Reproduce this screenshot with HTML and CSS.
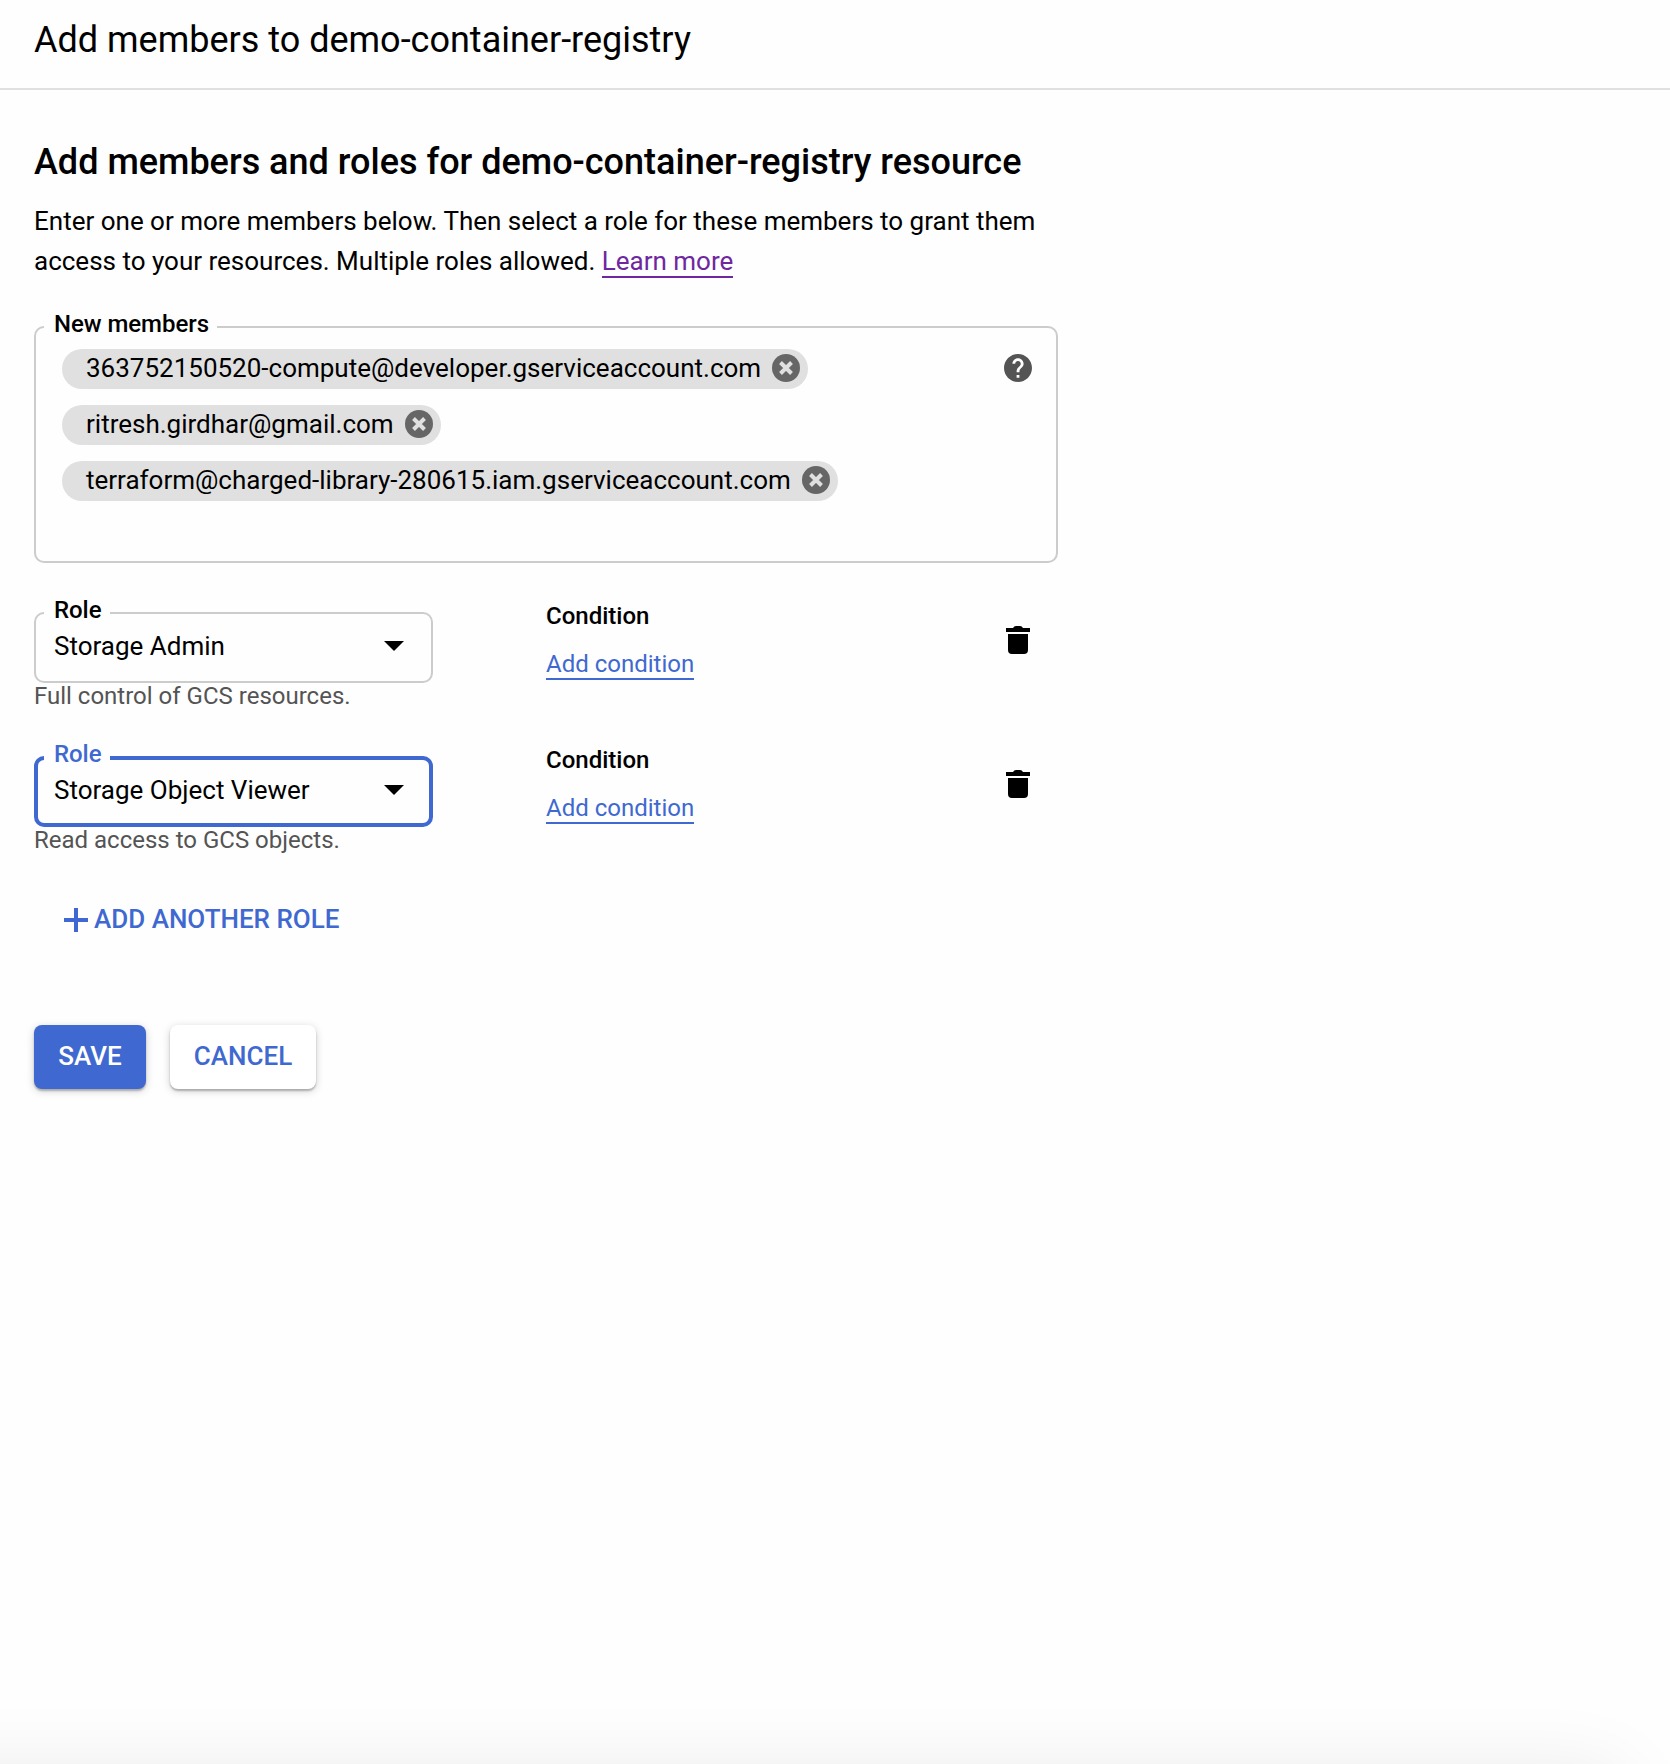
FILE: index.html
```html
<!DOCTYPE html>
<html lang="en">
<head>
<meta charset="utf-8">
<title>Add members to demo-container-registry</title>
<link rel="stylesheet" href="styles.css">
</head>
<body>
<svg class="sprite" aria-hidden="true">
  <symbol id="remove" viewBox="0 0 28 28"><circle cx="14" cy="14" r="14" fill="#666"/><path d="M8.500 8.500l11 11M19.500 8.500l-11 11" stroke="#e0e0e0" stroke-width="4"/></symbol>
  <symbol id="trash" viewBox="0 0 24 28"><path d="M0 2h7q1-2 3-2h4q2 0 3 2h7v4H0zM2 8h20v16q0 4-4 4H6q-4 0-4-4z"/></symbol>
</svg>
<header class="header"><h1 class="title">Add members to demo-container-registry</h1></header>
<main class="panel">
  <h2 class="heading">Add members and roles for demo-container-registry resource</h2>
  <p class="intro">Enter one or more members below. Then select a role for these members to grant them access to your resources. Multiple roles allowed. <a class="link link-visited" href="#">Learn more</a></p>

  <section class="field members">
    <span class="label">New members</span>
    <div class="chips">
      <div class="chip"><span class="chip-text">363752150520-compute@developer.gserviceaccount.com</span><svg class="chip-icon"><use href="#remove"/></svg></div>
      <div class="chip"><span class="chip-text">ritresh.girdhar@gmail.com</span><svg class="chip-icon"><use href="#remove"/></svg></div>
      <div class="chip"><span class="chip-text">terraform@charged-library-280615.iam.gserviceaccount.com</span><svg class="chip-icon"><use href="#remove"/></svg></div>
    </div>
    <svg class="help" viewBox="2 2 20 20"><path fill="#545454" d="M12 2C6.480 2 2 6.480 2 12s4.480 10 10 10 10-4.480 10-10S17.520 2 12 2zm1 17h-2v-2h2v2zm2.070-7.750l-.9.920C13.450 12.900 13 13.500 13 15h-2v-.5c0-1.100.450-2.100 1.170-2.830l1.240-1.260c.370-.360.590-.860.590-1.410 0-1.100-.9-2-2-2s-2 .9-2 2H8c0-2.210 1.790-4 4-4s4 1.790 4 4c0 .880-.360 1.680-.930 2.250z"/></svg>
  </section>

  <section class="role">
    <div class="role-select">
      <div class="field select"><span class="label">Role</span><span class="value">Storage Admin</span><svg class="arrow" viewBox="0 0 20 10"><path d="M0 0h20L10 10z"/></svg></div>
      <p class="hint">Full control of GCS resources.</p>
    </div>
    <div class="condition"><h3 class="condition-title">Condition</h3><a class="link" href="#">Add condition</a></div>
    <svg class="trash"><use href="#trash"/></svg>
  </section>
  <section class="role">
    <div class="role-select">
      <div class="field select focused"><span class="label">Role</span><span class="value">Storage Object Viewer</span><svg class="arrow" viewBox="0 0 20 10"><path d="M0 0h20L10 10z"/></svg></div>
      <p class="hint">Read access to GCS objects.</p>
    </div>
    <div class="condition"><h3 class="condition-title">Condition</h3><a class="link" href="#">Add condition</a></div>
    <svg class="trash"><use href="#trash"/></svg>
  </section>

  <button class="add-role"><svg class="plus" viewBox="0 0 24 24"><path d="M0 12h24M12 0v24" stroke="#3f69d0" stroke-width="4"/></svg>ADD ANOTHER ROLE</button>
  <div class="actions"><button class="btn primary">SAVE</button><button class="btn cancel">CANCEL</button></div>
</main>
<div class="bottom-shade"></div>
</body>
</html>
```

FILE: styles.css
```css
* { box-sizing: border-box; }
body { margin: 0; height: 1764px; position: relative; overflow: hidden; background: #fefefe; color: #000; font: 26px/40px Roboto, sans-serif; }
h1, h2, h3, p { margin: 0; }
button { border: 0; background: none; font: 500 26px/40px Roboto, sans-serif; color: #3f69d0; padding: 0; }
.sprite { position: absolute; width: 0; height: 0; }
.header { height: 90px; padding: 16px 34px 0; border-bottom: 2px solid #e0e0e0; }
.title { font-size: 36px; line-height: 48px; font-weight: 400; white-space: nowrap; }
.panel { width: 1024px; margin: 48px 0 0 34px; }
.heading { font-size: 36px; line-height: 48px; font-weight: 500; white-space: nowrap; margin-bottom: 15px; }
.intro { margin-bottom: 45px; }
.link { color: #3f69d0; text-decoration: none; border-bottom: 2px solid #3f69d0; }
.link-visited { color: #6f27a0; border-color: #6f27a0; }
.field { position: relative; border: 2px solid #ccc; border-radius: 10px; }
.label { position: absolute; left: 8px; top: -18px; padding: 0 8px 0 10px; background: #fefefe; font-size: 24px; line-height: 28px; font-weight: 500; letter-spacing: -.05px; white-space: nowrap; }
.members { height: 237px; padding: 21px 24px 0 26px; display: flex; align-items: flex-start; justify-content: space-between; }
.chips { display: flex; flex-direction: column; align-items: flex-start; gap: 16px; }
.chip { height: 40px; padding: 0 8px 0 24px; border-radius: 20px; background: #e0e0e0; display: flex; gap: 11px; }
.chip-text { line-height: 38px; white-space: nowrap; }
.chip-icon { width: 28px; height: 28px; margin-top: 5px; }
.help { width: 28px; height: 28px; margin-top: 5px; }
.role { display: flex; height: 95px; margin-top: 49px; }
.role-select { width: 399px; }
.select { height: 71px; display: flex; justify-content: space-between; padding: 12px 27px 0 18px; }
.value { line-height: 40px; }
.arrow { width: 20px; height: 10px; margin-top: 15px; }
.focused { border: 4px solid #3f69d0; padding: 10px 25px 0 16px; }
.focused .label { left: 6px; top: -20px; color: #3f69d0; }
.hint { margin-top: -1px; font-size: 24px; line-height: 28px; color: #545454; }
.condition { margin-left: 113px; width: 460px; font-size: 24px; }
.condition-title { font-size: 24px; line-height: 28px; font-weight: 500; margin-top: -10px; margin-bottom: 14px; }
.trash { width: 24px; height: 28px; margin-top: 14px; }
.add-role { display: flex; align-items: center; gap: 6px; margin: 48px 0 0 30px; }
.plus { width: 24px; height: 24px; margin-top: 2px; }
.actions { display: flex; gap: 24px; margin-top: 86px; }
.btn { height: 64px; padding: 0 0 2px; border-radius: 8px; background: #fff; box-shadow: 0 2px 2px rgba(0,0,0,.24), 0 2px 8px rgba(0,0,0,.18); }
.primary { width: 112px; background: #3f69d0; color: #fff; }
.cancel { width: 146px; }
.bottom-shade { position: absolute; left: 0; right: 0; bottom: 0; height: 72px; overflow: hidden; }
.bottom-shade::before { content: ""; position: absolute; left: -100px; right: 50px; top: 82px; height: 100px; box-shadow: 0 0 80px rgba(0,0,0,.09); }
```
